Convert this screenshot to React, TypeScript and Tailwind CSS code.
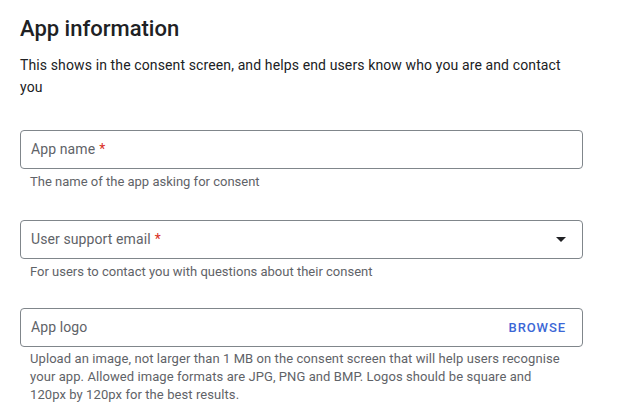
export default function App() {
  return (
    <main className="min-h-screen bg-white font-['Roboto',sans-serif] text-[#202124]">
      <section className="pl-5 pt-[15px] w-[583px]">
        <h1 className="text-[22px] leading-[28px] font-medium">App information</h1>
        <p className="mt-[11px] text-[14px] leading-[22px] tracking-[0.12px] text-[#202124]">
          This shows in the consent screen, and helps end users know who you are and contact you
        </p>

        <div className="mt-8">
          <div className="h-[39px] border border-[#80868b] rounded-[4px] flex items-center px-[10px] text-[14px] tracking-[0.1px] text-[#5f6368]">
            App name<span className="ml-1 text-[#d93025]">*</span>
          </div>
          <p className="mt-[4px] px-[10px] text-[13px] leading-[18px] text-[#5f6368]">
            The name of the app asking for consent
          </p>
        </div>

        <div className="mt-[29px]">
          <div className="h-[39px] border border-[#80868b] rounded-[4px] flex items-center justify-between pl-[10px] pr-[16px] text-[14px] tracking-[0.1px] text-[#5f6368]">
            <span>
              User support email<span className="ml-1 text-[#d93025]">*</span>
            </span>
            <svg width="10" height="5" viewBox="0 0 10 5">
              <path d="M0 0 L10 0 L5 5 Z" fill="#202124" />
            </svg>
          </div>
          <p className="mt-[4px] px-[10px] text-[13px] leading-[18px] text-[#5f6368]">
            For users to contact you with questions about their consent
          </p>
        </div>

        <div className="mt-[27px]">
          <div className="h-[39px] border border-[#80868b] rounded-[4px] flex items-center justify-between pl-[10px] pr-[16px] text-[14px] tracking-[0.1px] text-[#5f6368]">
            <span>App logo</span>
            <span className="text-[13px] font-medium tracking-[0.9px] text-[#3c67d6]">BROWSE</span>
          </div>
          <p className="mt-[3px] pl-[10px] pr-[20px] text-[13px] leading-[18px] tracking-[0.08px] text-[#5f6368]">
            Upload an image, not larger than 1 MB on the consent screen that will help users recognise your app. Allowed image formats are JPG, PNG and BMP. Logos should be square and 120px by 120px for the best results.
          </p>
        </div>
      </section>
    </main>
  )
}
